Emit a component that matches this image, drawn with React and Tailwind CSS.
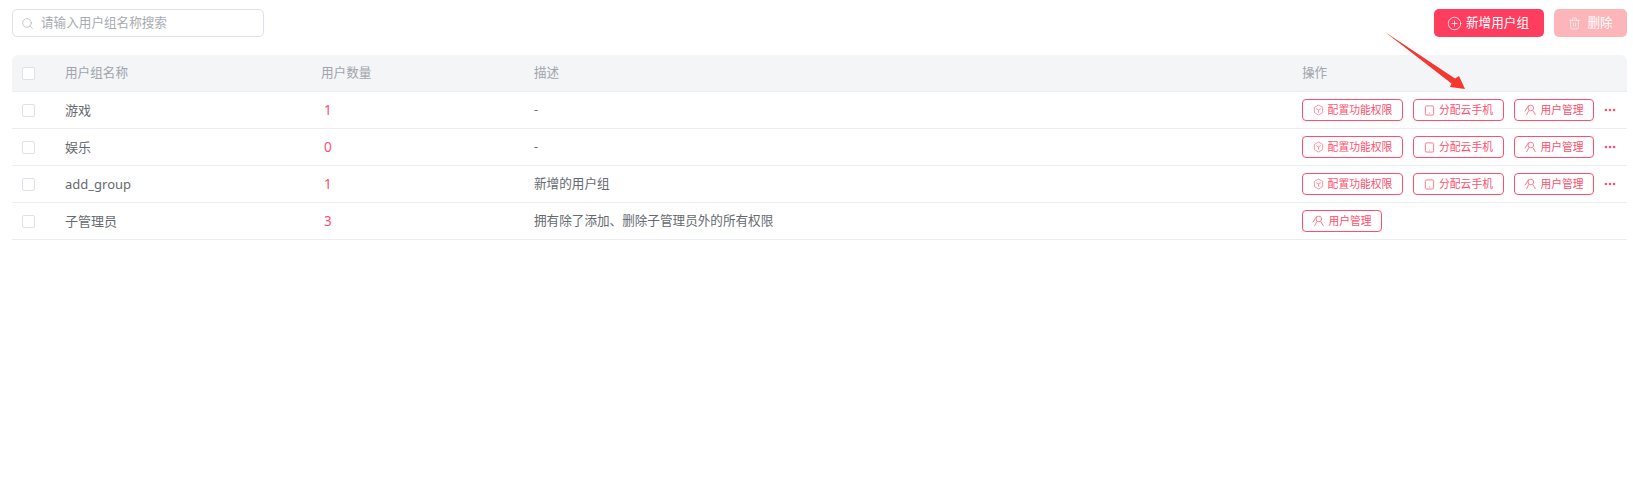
import { CirclePlus, Trash2, Search, Ellipsis } from "lucide-react";

const rows = [
  { name: "游戏", count: "1", desc: "-", full: true },
  { name: "娱乐", count: "0", desc: "-", full: true },
  { name: "add_group", count: "1", desc: "新增的用户组", full: true },
  { name: "子管理员", count: "3", desc: "拥有除了添加、删除子管理员外的所有权限", full: false },
];

const gridCols = "grid grid-cols-[43px_256px_213px_768px_1fr] items-center";

function Checkbox() {
  return <span className="block h-[13px] w-[13px] rounded-[2px] border border-[#dfe1e8] bg-white" />;
}

function CubeIcon() {
  return (
    <svg width="11" height="12" viewBox="0 0 12 13" fill="none" stroke="#ff8aa0" strokeWidth="1">
      <path d="M6 1 10.500 3.700V9.300L6 12 1.500 9.300V3.700Z" />
      <path d="M3.500 5 6 6.500 8.500 5M6 6.500V9.500" />
    </svg>
  );
}

function PhoneIcon() {
  return (
    <svg width="11" height="11" viewBox="0 0 12 12" fill="none" stroke="#ff6f88" strokeWidth="1">
      <rect x="1.500" y="1" width="9" height="10" rx="1.500" />
      <path d="M5.500 8.800h1" />
    </svg>
  );
}

function UsersIcon() {
  return (
    <svg width="12" height="12" viewBox="0 0 12 12" fill="none" stroke="#ff7d93" strokeWidth="1">
      <circle cx="6.800" cy="4" r="2.800" />
      <path d="M4.800 6.500 2.500 11M8.800 6.500 11.500 11" />
      <path d="M.8 7.500 4.500 1.500" />
    </svg>
  );
}

function ActionButton({ icon, label, width }) {
  return (
    <button className={`flex h-[22px] items-center justify-center gap-[4px] rounded-[4px] border border-[#ff4f6d] bg-white text-[10.8px] text-[#ff4f6d] ${width}`}>
      {icon}
      {label}
    </button>
  );
}

export default function App() {
  return (
    <div className="relative h-[489px] bg-white pl-3 pr-[6px] pt-[9px] font-['Noto_Sans','Noto_Sans_CJK_SC',sans-serif] text-[12.6px] text-[#666a70]">
      <div className="flex items-center justify-between">
        <div className="flex h-[28px] w-[252px] items-center gap-[7px] rounded-[5px] border border-[#dfe1ea] pl-[8px]">
          <Search size={13} strokeWidth={1.2} className="text-[#a8abb2]" />
          <span className="text-[#a8abb2]">请输入用户组名称搜索</span>
        </div>
        <div className="flex gap-[10px]">
          <button className="flex h-[28px] w-[110px] items-center justify-center gap-[4px] rounded-[5px] bg-[#ff3e5f] pr-[2px] text-white">
            <CirclePlus size={15} strokeWidth={1.2} />
            新增用户组
          </button>
          <button className="flex h-[28px] w-[73px] items-center justify-center gap-[6px] rounded-[5px] bg-[#fcb5b8] text-white">
            <Trash2 size={13} strokeWidth={1.2} />
            删除
          </button>
        </div>
      </div>

      <div className="mt-[18px]">
        <div className={`${gridCols} h-[37px] rounded-t-[6px] border-b border-[#ebedf3] bg-[#f4f5f7] text-[#a0a4ac]`}>
          <div className="pl-[10px]"><Checkbox /></div>
          <div className="pl-[10px] pt-px">用户组名称</div>
          <div className="pl-[10px] pt-px">用户数量</div>
          <div className="pl-[10px] pt-px">描述</div>
          <div className="pl-[10px] pt-px">操作</div>
        </div>
        {rows.map((row) => (
          <div key={row.name} className={`${gridCols} h-[37px] border-b border-[#ebedf3]`}>
            <div className="pl-[10px]"><Checkbox /></div>
            <div className="pl-[10px] pt-px text-[13px]">{row.name}</div>
            <div className="pl-[13px] pt-px text-[13.5px] text-[#ff4f6d]">{row.count}</div>
            <div className="pl-[10px] pt-px">{row.desc}</div>
            <div className="flex items-center pl-[10px]">
              {row.full ? (
                <>
                  <ActionButton icon={<CubeIcon />} label="配置功能权限" width="w-[101px]" />
                  <ActionButton icon={<PhoneIcon />} label="分配云手机" width="ml-[10px] w-[91px]" />
                  <ActionButton icon={<UsersIcon />} label="用户管理" width="ml-[10px] w-[80px]" />
                  <Ellipsis size={14} strokeWidth={2.4} className="ml-[9px] text-[#ff4f6d]" />
                </>
              ) : (
                <ActionButton icon={<UsersIcon />} label="用户管理" width="w-[80px]" />
              )}
            </div>
          </div>
        ))}
      </div>

      <svg className="absolute left-[1380px] top-[28px]" width="90" height="64" viewBox="0 0 90 64">
        <path d="M5 4 75 50.500 79 48 85 61 70 59 71.500 55.500Z" fill="#f5372f" />
      </svg>
    </div>
  );
}
